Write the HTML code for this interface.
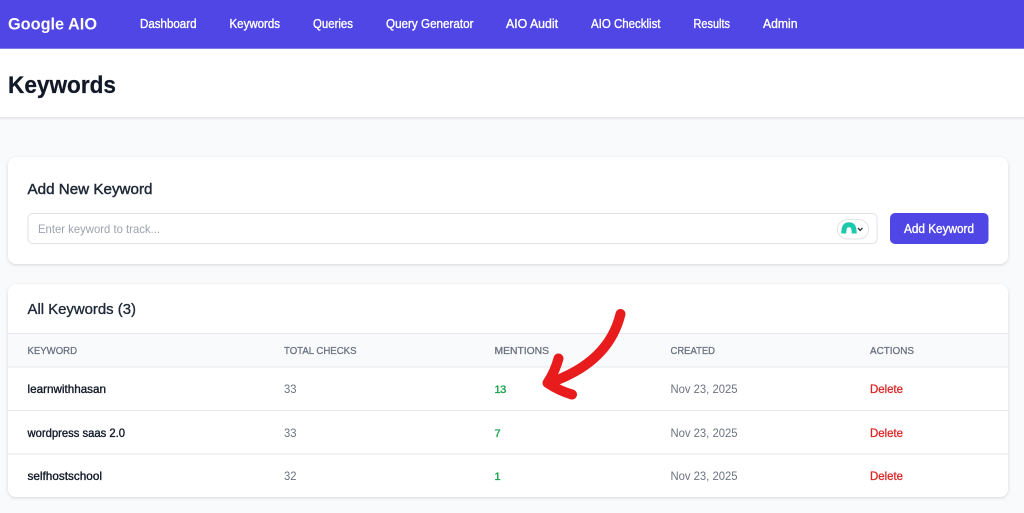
<!DOCTYPE html>
<html lang="en">
<head>
<meta charset="utf-8">
<title>Keywords</title>
<style>
html,body{margin:0;padding:0;width:1024px;height:513px;overflow:hidden;background:#f9fafb}
svg{display:block;position:absolute;left:0;top:0}
.card{position:absolute;left:8px;width:1000px;background:#fff;border-radius:8px;box-shadow:0 1px 3px rgba(0,0,0,.14)}
text{font-family:"Liberation Sans",sans-serif}
</style>
</head>
<body>
<div style="position:absolute;left:0;top:0;width:1024px;height:48px;background:#4f46e5;border-bottom:1px solid #7e78ec"></div>
<div style="position:absolute;left:0;top:49px;width:1024px;height:68px;background:#fff;border-bottom:1px solid #e5e7eb;box-shadow:0 1px 2px rgba(0,0,0,.07)"></div>
<div class="card" style="top:157px;height:107px"></div>
<div class="card" style="top:284px;height:213px"></div>
<svg width="1024" height="513" viewBox="0 0 1024 513" xmlns="http://www.w3.org/2000/svg">
  <g fill="#fff">
    <text x="8" y="29.5" font-size="16.5" font-weight="700" textLength="89" lengthAdjust="spacingAndGlyphs">Google AIO</text>
    <g font-size="12.5" stroke="#fff" stroke-width=".35">
      <text x="140" y="28" textLength="56.5" lengthAdjust="spacingAndGlyphs">Dashboard</text>
      <text x="229.5" y="28" textLength="50.5" lengthAdjust="spacingAndGlyphs">Keywords</text>
      <text x="313" y="28" textLength="40" lengthAdjust="spacingAndGlyphs">Queries</text>
      <text x="386" y="28" textLength="87.5" lengthAdjust="spacingAndGlyphs">Query Generator</text>
      <text x="506" y="28" textLength="52" lengthAdjust="spacingAndGlyphs">AIO Audit</text>
      <text x="591" y="28" textLength="69.5" lengthAdjust="spacingAndGlyphs">AIO Checklist</text>
      <text x="693.5" y="28" textLength="36.5" lengthAdjust="spacingAndGlyphs">Results</text>
      <text x="763" y="28" textLength="34.5" lengthAdjust="spacingAndGlyphs">Admin</text>
    </g>
  </g>
  <text x="8" y="93" font-size="24.5" font-weight="700" fill="#111827" stroke="#111827" stroke-width=".25" textLength="108" lengthAdjust="spacingAndGlyphs">Keywords</text>

  <text x="27.5" y="194" font-size="15" fill="#1f2937" stroke="#1f2937" stroke-width=".45" textLength="125" lengthAdjust="spacingAndGlyphs">Add New Keyword</text>
  <rect x="28" y="213.5" width="849" height="30" rx="4.5" fill="#fff" stroke="#dfe2e7"/>
  <text x="38" y="233" font-size="12" fill="#9ca3af" textLength="122" lengthAdjust="spacingAndGlyphs">Enter keyword to track...</text>
  <rect x="837.5" y="219.5" width="31" height="19.5" rx="9.75" fill="#fff" stroke="#e1e4e6"/>
  <path d="M843.8 233.5 C843.8 226.5 845.5 224.8 849 224.8 C852.5 224.8 854.2 226.5 854.2 233.5" fill="none" stroke="#1cc9ad" stroke-width="5"/>
  <path d="M858 228 L860.2 230.4 L862.4 228" fill="none" stroke="#333" stroke-width="1.3"/>
  <rect x="890" y="213" width="98.5" height="31" rx="5" fill="#4f46e5"/>
  <text x="904" y="233" font-size="12.5" fill="#fff" stroke="#fff" stroke-width=".35" textLength="70" lengthAdjust="spacingAndGlyphs">Add Keyword</text>

  <text x="27.5" y="314" font-size="15" fill="#1f2937" stroke="#1f2937" stroke-width=".35" textLength="108.5" lengthAdjust="spacingAndGlyphs">All Keywords (3)</text>
  <rect x="8" y="333" width="1000" height="34" fill="#f9fafb"/>
  <g fill="#e5e7eb">
    <rect x="8" y="333" width="1000" height="1"/>
    <rect x="8" y="366.5" width="1000" height="1"/>
    <rect x="8" y="410" width="1000" height="1"/>
    <rect x="8" y="453.5" width="1000" height="1"/>
  </g>
  <g font-size="10.5" fill="#6b7280" stroke="#6b7280" stroke-width=".3">
    <text x="27.5" y="354" textLength="49.5" lengthAdjust="spacingAndGlyphs">KEYWORD</text>
    <text x="284" y="354" textLength="72.5" lengthAdjust="spacingAndGlyphs">TOTAL CHECKS</text>
    <text x="494.5" y="354" textLength="54.5" lengthAdjust="spacingAndGlyphs">MENTIONS</text>
    <text x="670.5" y="354" textLength="44.5" lengthAdjust="spacingAndGlyphs">CREATED</text>
    <text x="870" y="354" textLength="44" lengthAdjust="spacingAndGlyphs">ACTIONS</text>
  </g>
  <g font-size="12" fill="#111827" stroke="#111827" stroke-width=".35">
    <text x="27.5" y="393" textLength="78.5" lengthAdjust="spacingAndGlyphs">learnwithhasan</text>
    <text x="27.5" y="437" textLength="97.5" lengthAdjust="spacingAndGlyphs">wordpress saas 2.0</text>
    <text x="27.5" y="480" textLength="74.5" lengthAdjust="spacingAndGlyphs">selfhostschool</text>
  </g>
  <g font-size="12" fill="#6b7280">
    <text x="284" y="393" textLength="12.5" lengthAdjust="spacingAndGlyphs">33</text>
    <text x="284" y="437" textLength="12.5" lengthAdjust="spacingAndGlyphs">33</text>
    <text x="284" y="480" textLength="12.5" lengthAdjust="spacingAndGlyphs">32</text>
    <text x="670.5" y="393" textLength="67" lengthAdjust="spacingAndGlyphs">Nov 23, 2025</text>
    <text x="670.5" y="437" textLength="67" lengthAdjust="spacingAndGlyphs">Nov 23, 2025</text>
    <text x="670.5" y="480" textLength="67" lengthAdjust="spacingAndGlyphs">Nov 23, 2025</text>
  </g>
  <g font-size="11" fill="#16a34a" stroke="#16a34a" stroke-width=".35">
    <text x="494.5" y="393" letter-spacing="-.5">13</text>
    <text x="494.5" y="437">7</text>
    <text x="494.5" y="480">1</text>
  </g>
  <g font-size="12" fill="#dc2626" stroke="#dc2626" stroke-width=".3">
    <text x="870" y="393" textLength="33" lengthAdjust="spacingAndGlyphs">Delete</text>
    <text x="870" y="437" textLength="33" lengthAdjust="spacingAndGlyphs">Delete</text>
    <text x="870" y="480" textLength="33" lengthAdjust="spacingAndGlyphs">Delete</text>
  </g>
  <g fill="none" stroke="#e81c1c" stroke-width="10" stroke-linecap="round" stroke-linejoin="round">
    <path d="M620.5 314 C613 345 590 369 549 383"/>
    <path d="M558.5 358.5 C556 368 552 376 547.5 383 C555 388 563 392 572 394.5"/>
  </g>
</svg>
</body>
</html>
